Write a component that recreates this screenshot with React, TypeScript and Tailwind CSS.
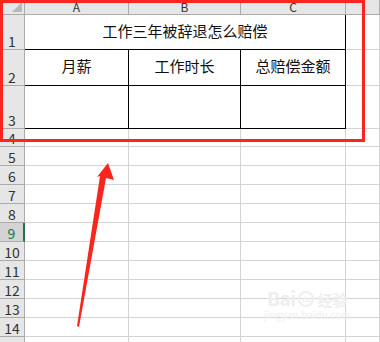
import React from 'react';

const grid = 'border-[#d4d4d4]';
const head = 'bg-[#e6e6e6] border-[#ababab]';

// row heights taken from the sheet, 1-based
const rows = [
  { n: 1, h: 35 },
  { n: 2, h: 36 },
  { n: 3, h: 43 },
  { n: 4, h: 18 },
  ...Array.from({ length: 11 }, (_, i) => ({ n: i + 5, h: 19 })),
];

function RowHead({ n, selected }: { n: number; selected?: boolean }) {
  return (
    <div
      className={`w-[25px] shrink-0 h-full flex items-end justify-center border-b pb-[1px] text-[14px] leading-none ${
        selected
          ? 'bg-[#d3d3d3] border-[#ababab] border-r-2 border-r-[#217346] text-[#217346]'
          : `${head} border-r text-[#333]`
      }`}
    >
      {n}
    </div>
  );
}

function Cell({ w, className = '', children }: { w?: string; className?: string; children?: React.ReactNode }) {
  return (
    <div className={`${w ?? 'flex-1'} shrink-0 h-full border-r border-b flex items-center justify-center ${className}`}>
      {children}
    </div>
  );
}

export default function App() {
  return (
    <div
      className="relative w-[380px] h-[342px] overflow-hidden bg-white text-[#111]"
      style={{ fontFamily: '"Noto Sans CJK SC", "Noto Sans", sans-serif' }}
    >
      {/* column headers */}
      <div className="flex h-[15px]">
        <div className={`w-[25px] shrink-0 h-full border-r border-b ${head} relative`}>
          <svg className="absolute right-[2px] bottom-[2px]" width="10" height="10" viewBox="0 0 10 10">
            <polygon points="10,0 10,10 0,10" fill="#b8b8b8" />
          </svg>
        </div>
        {[
          { l: 'A', w: 'w-[104px]' },
          { l: 'B', w: 'w-[112px]' },
          { l: 'C', w: 'w-[105px]' },
          { l: '', w: 'flex-1' },
        ].map((c) => (
          <div
            key={c.w}
            className={`${c.w} shrink-0 h-full border-r border-b ${head} flex items-start justify-center text-[12px] leading-[14px] text-[#333]`}
          >
            {c.l}
          </div>
        ))}
      </div>

      {rows.map((r) => (
        <div key={r.n} className="flex" style={{ height: r.h }}>
          <RowHead n={r.n} selected={r.n === 9} />
          {r.n === 1 ? (
            <Cell w="w-[321px]" className="border-r-black border-b-black text-[15px] pb-[2px]">
              工作三年被辞退怎么赔偿
            </Cell>
          ) : r.n === 2 || r.n === 3 ? (
            <>
              <Cell w="w-[104px]" className="border-black text-[15px] pb-[2px]">{r.n === 2 ? '月薪' : ''}</Cell>
              <Cell w="w-[112px]" className="border-black text-[15px] pb-[2px]">{r.n === 2 ? '工作时长' : ''}</Cell>
              <Cell w="w-[105px]" className="border-black text-[15px] pb-[2px]">{r.n === 2 ? '总赔偿金额' : ''}</Cell>
            </>
          ) : (
            <>
              <Cell w="w-[104px]" className={grid} />
              <Cell w="w-[112px]" className={grid} />
              <Cell w="w-[105px]" className={grid} />
            </>
          )}
          <Cell className={grid} />
        </div>
      ))}

      {/* red highlight frame */}
      <div className="absolute left-0 top-0 w-[365px] h-[142px] border-[3px] border-[#f8261c] pointer-events-none" />

      {/* red arrow */}
      <svg className="absolute left-0 top-0 pointer-events-none" width="380" height="342" viewBox="0 0 380 342">
        <polygon points="108,163 114,180 106,178 79,327 77,326 100,176 97,177" fill="#f8261c" />
      </svg>

      {/* baidu watermark */}
      <div className="absolute left-[264px] top-[288px] flex flex-col items-center leading-none text-[#eeeeee] pointer-events-none">
        <div className="flex items-end gap-[3px]">
          <span className="text-[19px] font-bold tracking-tight">Bai</span>
          <span className="w-[16px] h-[16px] rounded-full border-2 border-[#eeeeee] text-[7px] font-bold flex items-center justify-center">du</span>
          <span className="text-[15px] font-bold">经验</span>
        </div>
        <span className="text-[10px] mt-[3px]">jingyan.baidu.com</span>
      </div>
    </div>
  );
}
